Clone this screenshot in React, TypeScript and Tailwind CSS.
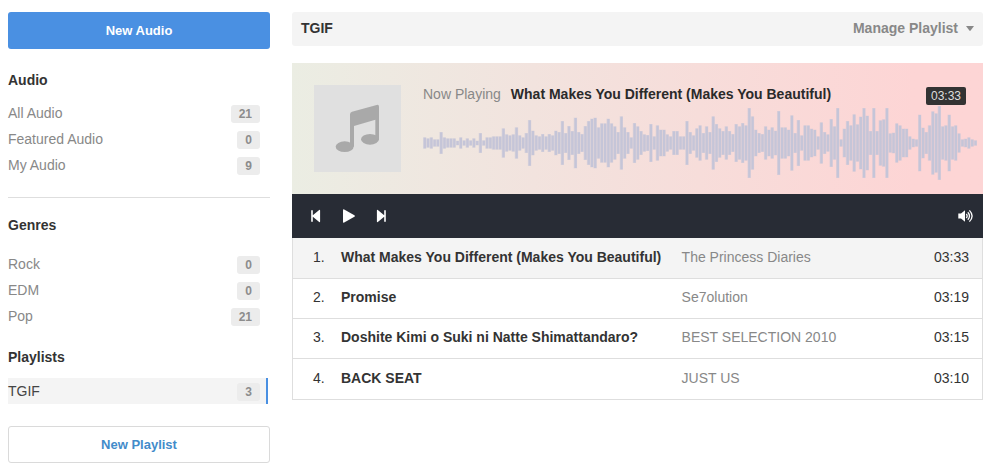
import React from "react";

type SidebarItem = {
  label: string;
  count: number;
  active?: boolean;
};

const audioItems: SidebarItem[] = [
  { label: "All Audio", count: 21 },
  { label: "Featured Audio", count: 0 },
  { label: "My Audio", count: 9 },
];

const genreItems: SidebarItem[] = [
  { label: "Rock", count: 0 },
  { label: "EDM", count: 0 },
  { label: "Pop", count: 21 },
];

const playlistItems: SidebarItem[] = [
  { label: "TGIF", count: 3, active: true },
];

const tracks = [
  {
    title: "What Makes You Different (Makes You Beautiful)",
    album: "The Princess Diaries",
    length: "03:33",
  },
  { title: "Promise", album: "Se7olution", length: "03:19" },
  {
    title: "Doshite Kimi o Suki ni Natte Shimattandaro?",
    album: "BEST SELECTION 2010",
    length: "03:15",
  },
  { title: "BACK SEAT", album: "JUST US", length: "03:10" },
];

// Amplitude of each bar, measured from the centre line
const peaks = [
  16, 13, 16, 10, 10, 32, 16, 13, 13, 13, 6, 16, 7, 13, 7, 13, 6, 29, 7, 16,
  16, 19, 19, 19, 43, 25, 22, 25, 46, 22, 16, 29, 68, 36, 22, 19, 26, 19, 26,
  22, 36, 32, 65, 29, 50, 35, 75, 32, 26, 50, 65, 72, 75, 46, 58, 58, 72, 58,
  49, 32, 79, 46, 32, 16, 59, 49, 35, 25, 23, 56, 19, 52, 39, 39, 25, 19, 35,
  35, 19, 19, 65, 32, 22, 43, 52, 29, 49, 32, 79, 56, 43, 35, 49, 35, 26, 56,
  49, 59, 52, 104, 79, 39, 29, 26, 49, 39, 46, 36, 95, 46, 46, 39, 82, 29, 68,
  22, 52, 52, 42, 39, 19, 61, 32, 25, 71, 49, 104, 10, 42, 65, 52, 85, 55, 78,
  104, 81, 35, 104, 35, 67, 70, 104, 28, 30, 58, 52, 42, 42, 19, 12, 10, 84,
  45, 32, 52, 94, 88, 110, 49, 52, 84, 49, 52, 28, 10, 12, 16, 10, 7,
];

const Waveform = () => (
  <svg
    viewBox={`0 0 ${peaks.length * 10} 222`}
    preserveAspectRatio="none"
    className="block h-[74px] w-full"
    aria-hidden="true"
  >
    {peaks.map((peak, i) => (
      <g key={i} fill="#c5c5d8">
        <rect
          x={i * 10}
          y={111 - peak - 1}
          width={10}
          height={peak * 2 + 2}
          opacity={0.5}
        />
        <rect x={i * 10 + 2} y={111 - peak} width={7} height={peak * 2} />
      </g>
    ))}
  </svg>
);

const AlbumArt = () => (
  <svg
    viewBox="0 0 261 261"
    className="size-[87px] shrink-0 bg-[#e0e0e0]"
    fill="#a9a9a9"
    aria-hidden="true"
  >
    <ellipse cx="92" cy="185" rx="27" ry="16" />
    <ellipse cx="168" cy="163" rx="27" ry="16" />
    <path d="M108 88q0-6 6-8L188 60q7-2 7 5V163H184V104L120 123V185H108Z" />
  </svg>
);

const SidebarList = ({ items }: { items: SidebarItem[] }) => (
  <ul>
    {items.map((item) => (
      <li key={item.label}>
        <a
          href="#"
          className={`mr-0.5 flex h-[26px] items-center justify-between text-sm ${
            item.active
              ? "border-r-2 border-[#4a90e2] bg-[#f4f4f4] pr-1.5 text-[#444]"
              : "pr-2 text-[#888]"
          }`}
        >
          {item.label}
          <span className="mt-0.5 rounded-[3px] bg-[#ececec] px-2 text-xs leading-[18px] font-bold text-[#8c8c8c]">
            {item.count}
          </span>
        </a>
      </li>
    ))}
  </ul>
);

const Sidebar = () => (
  <aside className="w-[262px] shrink-0">
    <button
      type="button"
      className="h-[37px] w-full rounded-[3px] bg-[#4a90e2] text-[13px] font-bold text-white"
    >
      New Audio
    </button>

    <h2 className="mt-[21px] mb-2.5 text-sm leading-5 font-bold">Audio</h2>
    <SidebarList items={audioItems} />

    <hr className="mt-[19px] mb-[17px] border-[#dedede]" />

    <h2 className="mb-4 text-sm leading-5 font-bold">Genres</h2>
    <SidebarList items={genreItems} />

    <h2 className="mt-[18px] mb-[11px] text-sm leading-5 font-bold">
      Playlists
    </h2>
    <SidebarList items={playlistItems} />

    <button
      type="button"
      className="mt-[22px] h-[37px] w-full rounded-[3px] border border-[#dadada] bg-white text-[13px] font-bold text-[#428bca]"
    >
      New Playlist
    </button>
  </aside>
);

const Player = () => (
  <section className="mt-[17px]">
    <div className="flex bg-linear-to-r from-[#ebede3] via-[#f2e3de] via-35% to-[#fdd5d5] to-90% pt-[22px] pr-1.5 pb-3.5 pl-[22px]">
      <AlbumArt />
      <div className="ml-[22px] min-w-0 flex-1">
        <div className="flex h-5 items-start text-sm leading-[18px]">
          <span className="text-[#888]">Now Playing</span>
          <span className="ml-2.5 font-bold text-[#2a2a2a]">
            {tracks[0].title}
          </span>
          <span className="mr-[11px] ml-auto self-end rounded-xs bg-[#333] px-[5px] text-xs leading-[18px] text-[#ddd]">
            {tracks[0].length}
          </span>
        </div>
        <div className="mt-px">
          <Waveform />
        </div>
      </div>
    </div>

    {/* Transport controls */}
    <div className="flex h-11 items-center bg-[#282c35] pr-2 pl-4 text-white">
      <button type="button" aria-label="Previous">
        <svg viewBox="0 0 16 16" className="size-4" fill="currentColor">
          <path d="M3.2 2.2h1.6v5L11.2 2q.9-.5.9.6v10.8q0 1.100-.9.6L4.800 8.800v5H3.200Z" />
        </svg>
      </button>
      <button type="button" aria-label="Play" className="ml-[17px]">
        <svg viewBox="0 0 16 16" className="size-4" fill="currentColor">
          <path d="M2 2.2Q2 .8 3.2 1.4L13.4 7.2Q14.6 8 13.4 8.8L3.2 14.6Q2 15.2 2 13.8Z" />
        </svg>
      </button>
      <button type="button" aria-label="Next" className="ml-4">
        <svg viewBox="0 0 16 16" className="size-4" fill="currentColor">
          <path d="M12.800 2.200h-1.600v5L4.800 2q-.9-.5-.9.6v10.800q0 1.100.9.6L11.200 8.800v5h1.600Z" />
        </svg>
      </button>
      <button type="button" aria-label="Volume" className="ml-auto">
        <svg viewBox="0 0 18 16" className="h-4 w-[18px]" fill="currentColor">
          <path d="M1.3 5.4H4L8 2.2v11.6L4 10.6H1.3Z" />
          <path
            d="M9.3 6q1.7 2 0 4M10.8 4.2q3.4 3.8 0 7.6M12.4 2.4q5.4 5.6 0 11.2"
            fill="none"
            stroke="currentColor"
            strokeWidth="1.3"
          />
        </svg>
      </button>
    </div>
  </section>
);

const TrackTable = () => (
  <div className="border-x border-b border-[#dedede]">
    <table className="w-full table-fixed text-left text-sm">
      <tbody>
        {tracks.map((track, i) => (
          <tr
            key={track.title}
            className={`${i === 0 ? "bg-[#f4f4f4]" : "bg-white"} ${
              i < tracks.length - 1
                ? "h-10 border-b border-[#dedede]"
                : "h-[41px]"
            }`}
          >
            <td className="w-12 pb-0.5 pl-5">{i + 1}.</td>
            <td className="w-[49%] pb-0.5 font-bold whitespace-nowrap">
              {track.title}
            </td>
            <td className="pb-0.5 pl-[3px] text-[#888]">{track.album}</td>
            <td className="w-20 pr-[13px] pb-0.5 text-right">
              {track.length}
            </td>
          </tr>
        ))}
      </tbody>
    </table>
  </div>
);

export const App = () => {
  return (
    <div className="flex gap-[22px] bg-white pt-3 pr-[13px] pb-[9px] pl-2 font-['Liberation_Sans',Arial,sans-serif] text-[#333]">
      <Sidebar />
      <main className="min-w-0 flex-1">
        <header className="flex h-[34px] items-center justify-between rounded-[3px] bg-[#f4f4f4] px-[9px] pb-0.5 text-sm font-bold">
          <h1>TGIF</h1>
          <button
            type="button"
            className="flex items-center gap-2 text-[#888]"
          >
            Manage Playlist
            <svg viewBox="0 0 8 5" className="h-[5px] w-2" fill="currentColor">
              <path d="M0 0h8L4.6 4.6q-.6.6-1.2 0Z" />
            </svg>
          </button>
        </header>
        <Player />
        <TrackTable />
      </main>
    </div>
  );
};

export default App;
